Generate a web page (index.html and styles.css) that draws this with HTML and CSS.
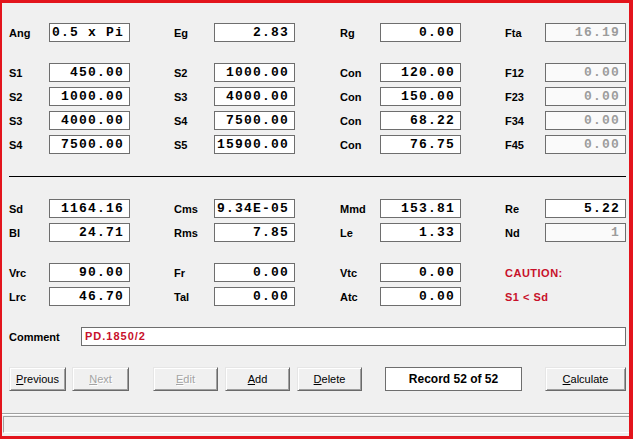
FILE: index.html
```html
<!DOCTYPE html>
<html>
<head>
<meta charset="utf-8">
<link rel="stylesheet" href="styles.css">
</head>
<body>
<div class="window">
  <div class="form">
    <div class="row">
      <div class="field"><span class="lbl">Ang</span><span class="box left">0.5 x Pi</span></div>
      <div class="field wide"><span class="lbl">Eg</span><span class="box">2.83</span></div>
      <div class="field"><span class="lbl">Rg</span><span class="box">0.00</span></div>
      <div class="field"><span class="lbl">Fta</span><span class="box off">16.19</span></div>
    </div>

    <div class="group gap-top">
      <div class="row">
        <div class="field"><span class="lbl">S1</span><span class="box">450.00</span></div>
        <div class="field wide"><span class="lbl">S2</span><span class="box">1000.00</span></div>
        <div class="field"><span class="lbl">Con</span><span class="box">120.00</span></div>
        <div class="field"><span class="lbl">F12</span><span class="box off">0.00</span></div>
      </div>
      <div class="row">
        <div class="field"><span class="lbl">S2</span><span class="box">1000.00</span></div>
        <div class="field wide"><span class="lbl">S3</span><span class="box">4000.00</span></div>
        <div class="field"><span class="lbl">Con</span><span class="box">150.00</span></div>
        <div class="field"><span class="lbl">F23</span><span class="box off">0.00</span></div>
      </div>
      <div class="row">
        <div class="field"><span class="lbl">S3</span><span class="box">4000.00</span></div>
        <div class="field wide"><span class="lbl">S4</span><span class="box">7500.00</span></div>
        <div class="field"><span class="lbl">Con</span><span class="box">68.22</span></div>
        <div class="field"><span class="lbl">F34</span><span class="box off">0.00</span></div>
      </div>
      <div class="row">
        <div class="field"><span class="lbl">S4</span><span class="box">7500.00</span></div>
        <div class="field wide"><span class="lbl">S5</span><span class="box">15900.00</span></div>
        <div class="field"><span class="lbl">Con</span><span class="box">76.75</span></div>
        <div class="field"><span class="lbl">F45</span><span class="box off">0.00</span></div>
      </div>
    </div>

    <div class="rule"></div>

    <div class="group rule-after">
      <div class="row">
        <div class="field"><span class="lbl">Sd</span><span class="box">1164.16</span></div>
        <div class="field wide"><span class="lbl">Cms</span><span class="box">9.34E-05</span></div>
        <div class="field"><span class="lbl">Mmd</span><span class="box">153.81</span></div>
        <div class="field"><span class="lbl">Re</span><span class="box">5.22</span></div>
      </div>
      <div class="row">
        <div class="field"><span class="lbl">Bl</span><span class="box">24.71</span></div>
        <div class="field wide"><span class="lbl">Rms</span><span class="box">7.85</span></div>
        <div class="field"><span class="lbl">Le</span><span class="box">1.33</span></div>
        <div class="field"><span class="lbl">Nd</span><span class="box off">1</span></div>
      </div>
    </div>

    <div class="group gap-top">
      <div class="row">
        <div class="field"><span class="lbl">Vrc</span><span class="box">90.00</span></div>
        <div class="field wide"><span class="lbl">Fr</span><span class="box">0.00</span></div>
        <div class="field"><span class="lbl">Vtc</span><span class="box">0.00</span></div>
        <div class="field"><span class="warn">CAUTION:</span></div>
      </div>
      <div class="row">
        <div class="field"><span class="lbl">Lrc</span><span class="box">46.70</span></div>
        <div class="field wide"><span class="lbl">Tal</span><span class="box">0.00</span></div>
        <div class="field"><span class="lbl">Atc</span><span class="box">0.00</span></div>
        <div class="field"><span class="warn">S1 &lt; Sd</span></div>
      </div>
    </div>

    <div class="comment-row gap-top">
      <span class="lbl comment-lbl">Comment</span>
      <span class="comment-box">PD.1850/2</span>
    </div>

    <div class="buttons">
      <span class="btn b-prev"><u>P</u>revious</span>
      <span class="btn b-next disabled"><u>N</u>ext</span>
      <span class="btn b-edit disabled"><u>E</u>dit</span>
      <span class="btn b-add"><u>A</u>dd</span>
      <span class="btn b-del"><u>D</u>elete</span>
      <span class="record">Record 52 of 52</span>
      <span class="btn b-calc"><u>C</u>alculate</span>
    </div>
  </div>

  <div class="status-sep"></div>
  <div class="status"></div>
</div>
</body>
</html>
```

FILE: styles.css
```css
html, body {
  margin: 0;
  padding: 0;
  background: #f0f0f0;
}

.window {
  width: 633px;
  height: 439px;
  box-sizing: border-box;
  border-style: solid;
  border-color: #e3141c;
  border-width: 3px 4px 3px 2px;
  background: #f0f0f0;
  display: flex;
  flex-direction: column;
  font-family: "Liberation Sans", Arial, sans-serif;
  overflow: hidden;
}

.form {
  padding: 20px 3px 0 7px;
  display: flex;
  flex-direction: column;
}

.group {
  display: flex;
  flex-direction: column;
  gap: 5px;
}

.gap-top {
  margin-top: 21px;
}

.rule {
  height: 1px;
  background: #000;
  margin-top: 22px;
}

.rule-after {
  margin-top: 22px;
}

.row {
  display: flex;
  height: 19px;
}

.field {
  display: flex;
  align-items: center;
  width: 165px;
  flex: none;
}

.field.wide {
  width: 166px;
}

.lbl {
  width: 40px;
  flex: none;
  font-size: 11px;
  font-weight: bold;
  color: #000;
}

.box {
  width: 81px;
  height: 19px;
  box-sizing: border-box;
  border: 1px solid #6e6e6e;
  background: #fff;
  font-family: "Liberation Mono", "Courier New", monospace;
  font-weight: bold;
  font-size: 13px;
  letter-spacing: 1.2px;
  line-height: 17px;
  text-align: right;
  padding-right: 5px;
  color: #000;
  white-space: nowrap;
  overflow: hidden;
}

.box.left {
  text-align: left;
  padding-left: 2px;
  padding-right: 0;
}

.box.off {
  color: #9c9c9c;
  background: #fafafa;
}

.warn {
  font-size: 11px;
  font-weight: bold;
  letter-spacing: 0.5px;
  color: #c8102a;
  white-space: nowrap;
}

.comment-row {
  display: flex;
  align-items: center;
  height: 19px;
}

.comment-lbl {
  width: 72px;
}

.comment-box {
  width: 545px;
  height: 19px;
  box-sizing: border-box;
  border: 1px solid #6e6e6e;
  background: #fff;
  font-size: 11px;
  font-weight: bold;
  letter-spacing: 1px;
  color: #c8102a;
  line-height: 17px;
  padding-left: 3px;
}

.buttons {
  display: flex;
  margin-top: 21px;
  height: 24px;
}

.btn {
  height: 24px;
  box-sizing: border-box;
  display: flex;
  align-items: center;
  justify-content: center;
  font-size: 11px;
  color: #000;
  background: #f0f0f0;
  border: 1px solid;
  border-color: #e6e6e6 #6a6a6a #6a6a6a #e6e6e6;
  box-shadow: inset 1px 1px #ffffff, inset -1px -1px #a0a0a0;
}

.btn.disabled {
  color: #a3a3a3;
  text-shadow: 1px 1px #ffffff;
}

.b-prev { width: 57px; }
.b-next { width: 57px; margin-left: 6px; }
.b-edit { width: 65px; margin-left: 24px; }
.b-add { width: 65px; margin-left: 7px; }
.b-del { width: 65px; margin-left: 7px; }
.b-calc { width: 81px; margin-left: 23px; }

.record {
  width: 137px;
  height: 24px;
  margin-left: 23px;
  box-sizing: border-box;
  border: 1px solid #6e6e6e;
  background: #fff;
  display: flex;
  align-items: center;
  justify-content: center;
  font-size: 12px;
  font-weight: bold;
  color: #000;
}

.status-sep {
  margin-top: 22px;
  height: 1px;
  background: #a0a0a0;
  border-bottom: 1px solid #ffffff;
}

.status {
  margin-top: 1px;
  margin-left: 1px;
  height: 17px;
  box-sizing: border-box;
  border-top: 1px solid #a0a0a0;
  border-left: 1px solid #a0a0a0;
  border-bottom: 1px solid #ffffff;
  background: #f0f0f0;
}
```
